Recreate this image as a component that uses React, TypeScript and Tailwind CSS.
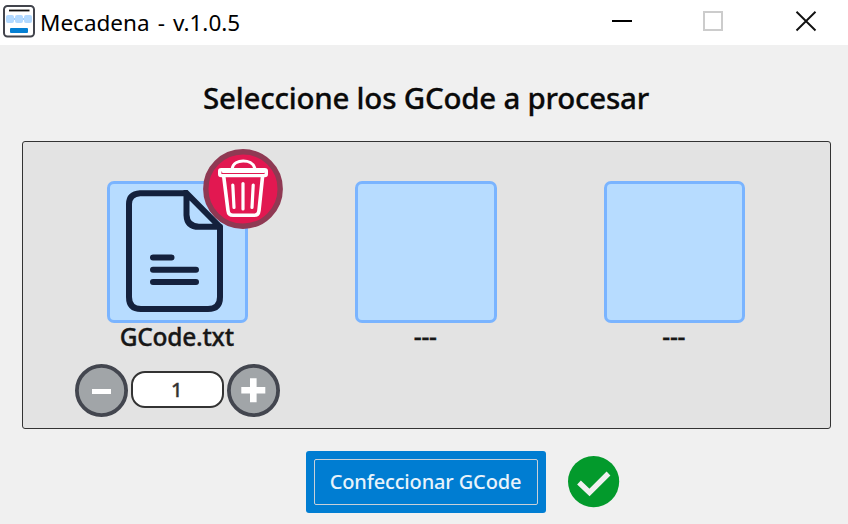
function AppIcon() {
  return (
    <svg width="34" height="34" viewBox="0 0 34 34" className="shrink-0">
      <rect x="2" y="2" width="30" height="30.5" rx="3.5" fill="#fff" stroke="#42444c" strokeWidth="2" />
      <path d="M7 6.5H27.5" stroke="#111" strokeWidth="1.8" />
      <path d="M10 15H26" stroke="#9fccfa" strokeWidth="2" />
      <rect x="4" y="11" width="8" height="8" rx="2" fill="#b2d9ff" />
      <rect x="13" y="11" width="8" height="8" rx="2" fill="#b2d9ff" />
      <rect x="22" y="11" width="8" height="8" rx="2" fill="#b2d9ff" />
      <rect x="8" y="24" width="18" height="5" rx="1" fill="#0580d3" />
    </svg>
  );
}

function TitleBar() {
  return (
    <header className="flex h-[45px] w-full items-start bg-white">
      <div className="flex w-[590px] items-start pl-[2px] pt-[4px]">
        <AppIcon />
        <h1 className="ml-[4px] mt-[3px] whitespace-nowrap font-['Noto_Sans',sans-serif] text-[22.5px] leading-[32px] text-black [word-spacing:2.2px]">
          Mecadena - v.1.0.5
        </h1>
      </div>
      <svg width="258" height="45" viewBox="0 0 258 45" fill="none">
        <path d="M22 21H42" stroke="#000" strokeWidth="2" />
        <rect x="114" y="12" width="18" height="18" stroke="#ccc" strokeWidth="2" />
        <path d="M206.5 11.8L225.5 30.5M225.5 11.8L206.5 30.5" stroke="#111" strokeWidth="1.9" />
      </svg>
    </header>
  );
}

function DocumentIcon() {
  return (
    <svg width="98" height="123" viewBox="126 190 98 123" fill="none" stroke="#14213d" strokeWidth="6" strokeLinecap="round" strokeLinejoin="round" className="shrink-0">
      <path d="M185.5 193.2H140Q129 194 129 204V297Q129 309 141 309H208Q220 309 220 297V227L186.5 193.2V215Q187 226.8 199 226.8H220" strokeLinejoin="miter" />
      <path d="M153 257.4H171.5M153 269.8H196M153 282H196" />
    </svg>
  );
}

function TrashIcon() {
  return (
    <svg width="80" height="80" viewBox="0 0 80 80" fill="none" stroke="#fff" strokeLinecap="round" strokeLinejoin="round">
      <circle cx="40" cy="40" r="37.2" fill="#e21851" stroke="#8f3953" strokeWidth="5.4" />
      <path d="M29.3 19C31 9.8 49 9.3 51.7 19" strokeWidth="3" />
      <rect x="16.7" y="20.6" width="46.6" height="6" rx="1.5" strokeWidth="3.4" />
      <path d="M20 22.5H61" strokeWidth="2.8" />
      <path d="M20.8 28L25 61.5Q25.5 66.3 30 66.3H51Q55.5 66.3 56 61.5L59.5 28" strokeWidth="3.6" />
      <path d="M29.8 36L31 58.5M40 34.5V60M50.2 36L49 58.5" strokeWidth="3.2" />
    </svg>
  );
}

function StepButton({ plus = false }: { plus?: boolean }) {
  return (
    <button className="shrink-0" aria-label={plus ? "Aumentar" : "Disminuir"}>
      <svg width="53" height="53" viewBox="0 0 53 53" className="block">
        <circle cx="26.5" cy="26.5" r="24.6" fill="#a1a5a8" stroke="#43464f" strokeWidth="3.8" />
        {plus ? (
          <path d="M14.3 26.2H38.3M26.3 14.2V38.2" stroke="#fff" strokeWidth="6.6" />
        ) : (
          <path d="M17 27.5H36" stroke="#fff" strokeWidth="5" />
        )}
      </svg>
    </button>
  );
}

function FileSlot({ name, loaded = false }: { name: string; loaded?: boolean }) {
  return (
    <section className="flex w-[248.5px] shrink-0 flex-col items-center">
      <div className="relative mr-px flex h-[142px] w-[141.5px] items-start justify-start rounded-[7px] border-3 border-[#7ab4ff] bg-[#b7dcff] pl-[16px] pt-[6px]">
        {loaded && <DocumentIcon />}
        {loaded && (
          <button className="absolute -top-[35px] left-[93px]" aria-label="Eliminar">
            <TrashIcon />
          </button>
        )}
      </div>
      <p className="h-[41px] pr-[2px] text-[24.5px] font-medium leading-[27px] tracking-[-0.25px] text-[#171717] [-webkit-text-stroke:0.35px_#171717]">{name}</p>
      {loaded && (
        <div className="flex items-center justify-center gap-[3px] pr-px">
          <StepButton />
          <div className="mb-[2px] flex h-[37px] w-[93px] items-center justify-center rounded-[14px] border-2 border-[#333] bg-white pr-px text-[20px] font-medium leading-[20px] text-[#333] [-webkit-text-stroke:0.3px_#333]">
            1
          </div>
          <StepButton plus />
        </div>
      )}
    </section>
  );
}

export default function App() {
  return (
    <main className="flex h-[524px] w-[848px] flex-col overflow-hidden bg-[#f0f0f0] font-['Noto_Sans',sans-serif]">
      <TitleBar />
      <h2 className="flex h-[96px] items-center justify-center pl-[4px] pt-[11px] text-[29.5px] font-medium tracking-[-0.23px] text-[#0a0a0a] [-webkit-text-stroke:0.3px_#0a0a0a]">
        Seleccione los GCode a procesar
      </h2>
      <div className="ml-[22px] flex h-[288px] w-[809px] shrink-0 rounded-[3px] border border-[#333] bg-[#e3e3e3] pl-[30.5px] pt-[39px]">
        <FileSlot name="GCode.txt" loaded />
        <FileSlot name="---" />
        <FileSlot name="---" />
      </div>
      <footer className="flex items-center pl-[306px] pt-[22px]">
        <button className="h-[62px] w-[240px] rounded-[3px] bg-[#007dd2] p-2">
          <span className="flex h-full w-full items-center justify-center rounded-[2px] border border-[#c8d0d8] pr-px text-[20px] font-medium tracking-[-0.15px] text-[#e8f3fb]">
            Confeccionar GCode
          </span>
        </button>
        <svg width="52" height="52" viewBox="0 0 52 52" className="ml-[22px]">
          <circle cx="25.6" cy="25.6" r="25.6" fill="#039a2c" />
          <path d="M11 26.5L21.5 36.5L40.5 17.5" fill="none" stroke="#f0f0f0" strokeWidth="5.4" />
        </svg>
      </footer>
    </main>
  );
}
